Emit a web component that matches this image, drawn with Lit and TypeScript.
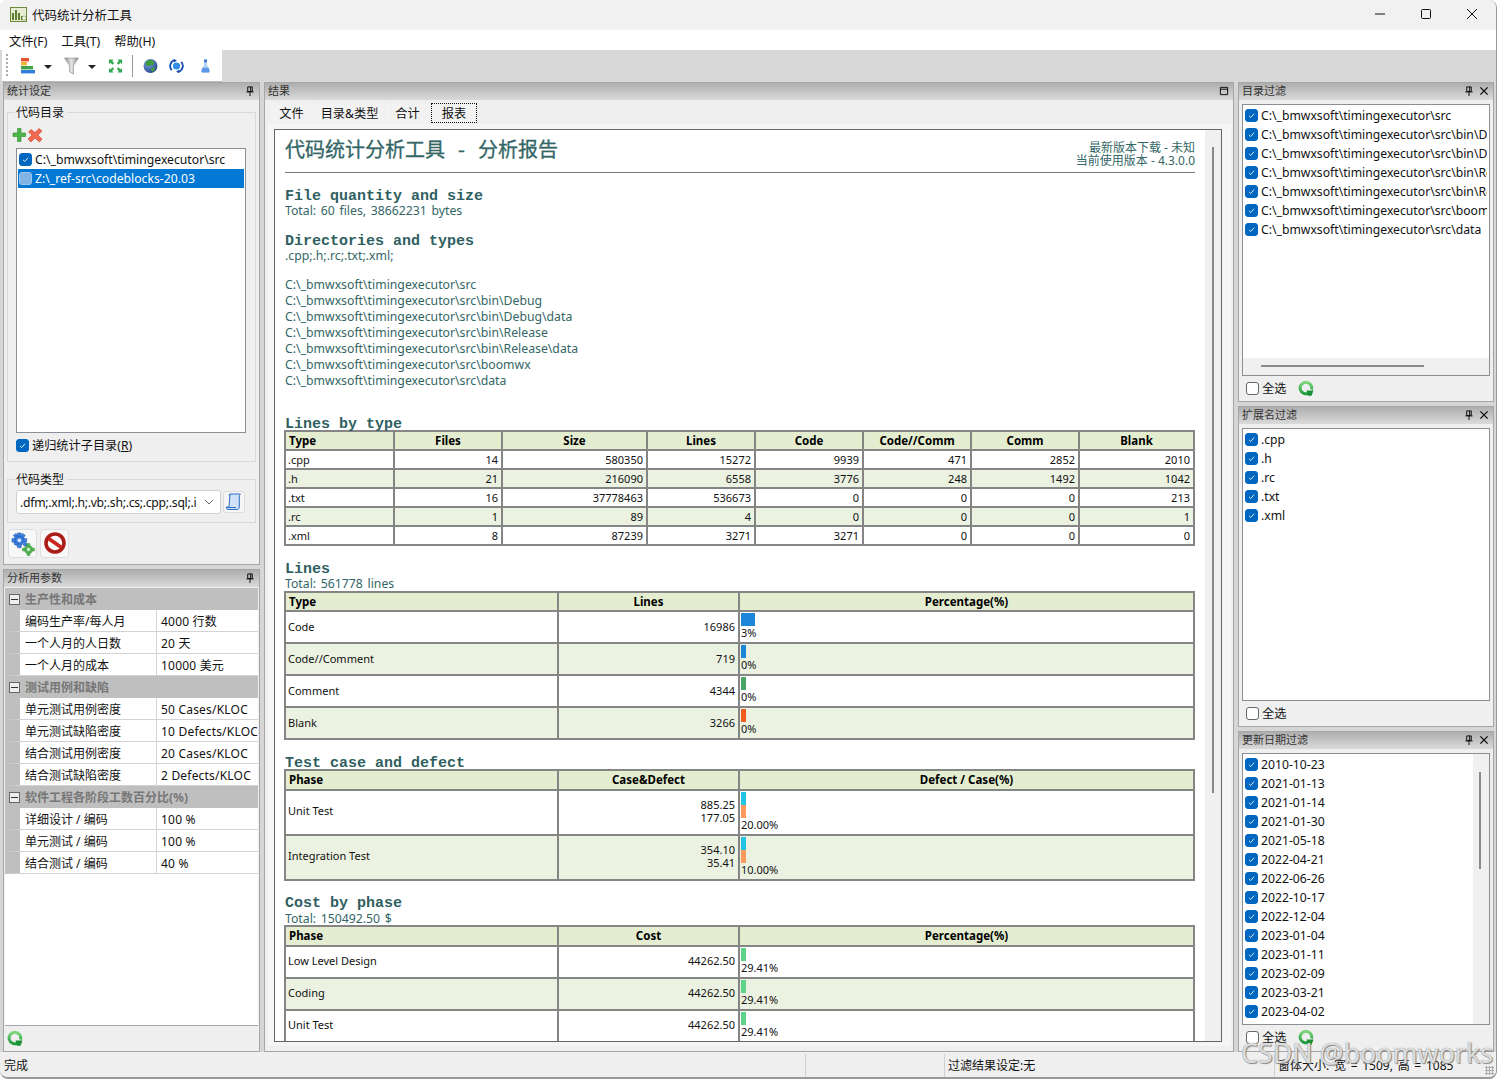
import { LitElement, html, css, TemplateResult } from "lit";
import { customElement } from "lit/decorators.js";

const check = html`<svg class="tick" viewBox="0 0 13 13"><path d="M3.5 6.8 5.6 8.9 9.6 4.3" fill="none" stroke="#fff" stroke-width="1"/></svg>`;
const cb = (on = true, cls = "") => html`<span class="cb ${on ? "on" : ""} ${cls}">${on ? check : ""}</span>`;

const pin = html`<svg class="hi" viewBox="0 0 11 11"><path d="M3 1h5v5H3zM6.2 1v5M1.5 6.5h8M5.5 6.5V11" fill="none" stroke="#111" stroke-width="1.1"/></svg>`;
const closeI = html`<svg class="hi" viewBox="0 0 11 11"><path d="M1.5 1.5l8 8M9.5 1.5l-8 8" stroke="#111" stroke-width="1.5"/></svg>`;
const restore = html`<svg class="hi" viewBox="0 0 11 11"><path d="M1.5 1.5h8v8h-8zM1.5 3.5h8" fill="none" stroke="#111" stroke-width="1.1"/></svg>`;

const refresh = html`<svg class="rf" viewBox="0 0 16 16"><defs><linearGradient id="rg" x1="0" y1="0" x2="0" y2="1"><stop offset="0" stop-color="#7fd67f"/><stop offset="1" stop-color="#1f9a3c"/></linearGradient></defs><path d="M11 12.900A5.800 5.800 0 1 1 13.500 9.500" fill="none" stroke="url(#rg)" stroke-width="3"/><path d="M8.500 10.500h7l-2 5.300h-3.500z" fill="#1b8f33"/></svg>`;

const tbChart = html`<svg class="tb" viewBox="0 0 15 18"><rect x="1" y="1" width="8" height="3.4" fill="#e8512f"/><rect x="1" y="5" width="6" height="3.4" fill="#f2b632"/><rect x="1" y="9" width="12" height="3.4" fill="#3fa34d"/><rect x="1" y="13" width="14" height="3.4" fill="#2f7fd6"/></svg>`;
const tbFilter = html`<svg class="tb" viewBox="0 0 15 18"><defs><linearGradient id="fg" x1="0" x2="1"><stop offset="0" stop-color="#8f8f8f"/><stop offset=".5" stop-color="#e4e4e4"/><stop offset="1" stop-color="#8a8a8a"/></linearGradient></defs><path d="M.5 1h14L9.500 8.500V17l-4-2V8.500z" fill="url(#fg)" stroke="#8b8b8b" stroke-width=".6"/></svg>`;
const tbExpand = html`<svg class="tb" viewBox="0 0 16 16"><g fill="#34a853"><path d="M1 1h5L4.400 2.600 6.600 4.800 4.800 6.600 2.600 4.400 1 6z"/><path d="M15 1h-5l1.600 1.600-2.200 2.200 1.800 1.800 2.200-2.200L15 6z"/><path d="M1 15h5l-1.600-1.600 2.200-2.200-1.800-1.800-2.200 2.200L1 10z"/><path d="M15 15h-5l1.600-1.600-2.200-2.200 1.800-1.800 2.200 2.200L15 10z"/></g></svg>`;
const tbGlobe = html`<svg class="tb" viewBox="0 0 16 16"><defs><radialGradient id="gl" cx=".35" cy=".3" r=".8"><stop offset="0" stop-color="#7fa8e0"/><stop offset="1" stop-color="#1c3c8c"/></radialGradient></defs><circle cx="8" cy="8" r="7.400" fill="url(#gl)"/><path d="M5 2c3-1 6 0 7 2 1 2-1 3-3 3S7 9 5 8 2 6 3 4zM9 10c2-1 4-1 4 0 0 2-2 4-3 4s-2-3-1-4z" fill="#3d9a3d"/></svg>`;
const tbSync = html`<svg class="tb" viewBox="0 0 16 16"><circle cx="8" cy="8" r="3.800" fill="#2f8fe8"/><path d="M3 12.500A6.500 6.500 0 0 1 6 1.800M13 3.500A6.500 6.500 0 0 1 10 14.200" fill="none" stroke="#1c4fb0" stroke-width="2"/><path d="M5 .2 8.400 2 5.400 4.200zM11 15.800 7.600 14l3-2.200z" fill="#1c4fb0"/></svg>`;
const tbFlask = html`<svg class="tb fl" viewBox="0 0 16 18"><path d="M6 1h4v3l-.2 3 3.200 8c.3 1.200-.4 2-1.400 2H4.400c-1 0-1.700-.8-1.400-2l3.200-8L6 4z" fill="#b5d4f5"/><path d="M6.200 1h3.600v3.500H6.200z" fill="#3b76d0"/><path d="M4 11h8l1 4c.2 1-.5 2-1.400 2H4.400c-.9 0-1.600-1-1.400-2z" fill="#5b97e6"/></svg>`;

const plusX = html`<svg class="addx" viewBox="0 0 32 16"><path d="M5.500 1.500h3.500v4.500h4.500v3.500H9v5H5.500v-5H1V6h4.500z" fill="#4cb648" stroke="#2d8a2d" stroke-width=".6"/><path d="M19 2.500 23 5.500l4-4 3 2.500-4 4 4 4-2.500 3-4.500-4-4 4-3-3 4-4-3.500-3z" fill="#ef6a50" stroke="#c83a22" stroke-width=".6"/></svg>`;
const scroll = html`<svg class="sc" viewBox="0 0 16 18"><path d="M4 1h10.500c-1 1-1.200 2-1.200 3v10c0 1.500-1 2.500-2.300 2.500H2c-1.200 0-1.600-1-1.500-2.500H3z" fill="#cfe2f7" stroke="#2f6fc2"/><path d="M4 1c-1 0-1 2 0 2M1 14.500h9" fill="none" stroke="#2f6fc2"/></svg>`;
const gears = html`<svg class="bi" viewBox="0 0 26 26"><g fill="#3c7fe0" stroke="#1f56ad" stroke-width=".5"><circle cx="9" cy="9" r="5.500"/><path d="M7 1h4v4H7zM7 13h4v4H7zM1 7h4v4H1zM13 7h4v4h-4zM2.500 3.500l3-2 2 3-3 2zM13 14l2-3 3 2-2 3zM12.500 1.500l3 2-2 3-3-2zM3 13l2-3 3 2-2 3z"/></g><circle cx="9" cy="9" r="2" fill="#d9e8fb"/><g fill="#5ab95a" stroke="#2f8a2f" stroke-width=".5"><circle cx="19" cy="19" r="4.500"/><path d="M17.500 12.500h3v3h-3zM17.500 22.500h3v3h-3zM12.500 17.500h3v3h-3zM22.500 17.500h3v3h-3z"/></g><circle cx="19" cy="19" r="1.600" fill="#dff2df"/></svg>`;
const stop = html`<svg class="bi" viewBox="0 0 24 24"><circle cx="12" cy="11" r="9" fill="#fff" stroke="#b3201a" stroke-width="3.600"/><circle cx="12" cy="11" r="9" fill="none" stroke="#7d1511" stroke-width=".5"/><path d="M5.500 6.500 18.500 15.500" stroke="#c9261f" stroke-width="3.800"/></svg>`;

const groups: { title: string; rows: [string, string][] }[] = [
  { title: "生产性和成本", rows: [["编码生产率/每人月", "4000 行数"], ["一个人月的人日数", "20 天"], ["一个人月的成本", "10000 美元"]] },
  { title: "测试用例和缺陷", rows: [["单元测试用例密度", "50 Cases/KLOC"], ["单元测试缺陷密度", "10 Defects/KLOC"], ["结合测试用例密度", "20 Cases/KLOC"], ["结合测试缺陷密度", "2 Defects/KLOC"]] },
  { title: "软件工程各阶段工数百分比(%)", rows: [["详细设计 / 编码", "100 %"], ["单元测试 / 编码", "100 %"], ["结合测试 / 编码", "40 %"]] },
];

const base = "C:\\_bmwxsoft\\timingexecutor\\src";
const dirs = [base, base + "\\bin\\Debug", base + "\\bin\\Debug\\data", base + "\\bin\\Release", base + "\\bin\\Release\\data", base + "\\boomwx", base + "\\data"];
const exts = [".cpp", ".h", ".rc", ".txt", ".xml"];
const dates = ["2010-10-23", "2021-01-13", "2021-01-14", "2021-01-30", "2021-05-18", "2022-04-21", "2022-06-26", "2022-10-17", "2022-12-04", "2023-01-04", "2023-01-11", "2023-02-09", "2023-03-21", "2023-04-02"];

const typeCols = [109, 108, 145, 108, 108, 108, 108, 115];
const typeHead = ["Type", "Files", "Size", "Lines", "Code", "Code//Comm", "Comm", "Blank"];
const typeRows = [
  [".cpp", "14", "580350", "15272", "9939", "471", "2852", "2010"],
  [".h", "21", "216090", "6558", "3776", "248", "1492", "1042"],
  [".txt", "16", "37778463", "536673", "0", "0", "0", "213"],
  [".rc", "1", "89", "4", "0", "0", "0", "1"],
  [".xml", "8", "87239", "3271", "3271", "0", "0", "0"],
];
const wideCols = [273, 181, 455];

type BarRow = { name: string; val: string[]; bars: { w: number; c: string }[]; pct: string };
const lineRows: BarRow[] = [
  { name: "Code", val: ["16986"], bars: [{ w: 14, c: "#1c86d8" }], pct: "3%" },
  { name: "Code//Comment", val: ["719"], bars: [{ w: 5, c: "#1c86d8" }], pct: "0%" },
  { name: "Comment", val: ["4344"], bars: [{ w: 5, c: "#4aa564" }], pct: "0%" },
  { name: "Blank", val: ["3266"], bars: [{ w: 5, c: "#f25c1f" }], pct: "0%" },
];
const testRows: BarRow[] = [
  { name: "Unit Test", val: ["885.25", "177.05"], bars: [{ w: 5, c: "#22c4e6" }, { w: 5, c: "#ff9a5c" }], pct: "20.00%" },
  { name: "Integration Test", val: ["354.10", "35.41"], bars: [{ w: 5, c: "#22c4e6" }, { w: 5, c: "#ff9a5c" }], pct: "10.00%" },
];
const costRows: BarRow[] = [
  { name: "Low Level Design", val: ["44262.50"], bars: [{ w: 5, c: "#5fd38a" }], pct: "29.41%" },
  { name: "Coding", val: ["44262.50"], bars: [{ w: 5, c: "#5fd38a" }], pct: "29.41%" },
  { name: "Unit Test", val: ["44262.50"], bars: [{ w: 5, c: "#5fd38a" }], pct: "29.41%" },
];

@customElement("app-root")
export class AppRoot extends LitElement {
  static styles = css`
    :host { display: block; width: 1497px; height: 1079px; overflow: hidden; font: 12.2px "Noto Sans", "Noto Sans CJK SC", sans-serif; color: #111; }
    * { box-sizing: border-box; }
    .window { position: relative; width: 1497px; height: 1079px; background: #d6d6d6; display: flex; flex-direction: column; border-right: 1px solid #999; border-bottom: 2px solid #999; border-radius: 8px; overflow: hidden; }
    .title { height: 30px; flex: none; background: #f1f1f1; display: flex; align-items: center; padding: 0 1px 2px 10px; gap: 5px; font-size: 12.5px; }
    .title svg.logo { width: 17px; height: 15px; }
    .title .grow { flex: 1; }
    .winbtn { width: 46px; height: 28px; margin-left: -5px; display: flex; align-items: center; justify-content: center; }
    .winbtn svg { width: 12px; height: 12px; }
    .menu { height: 20px; flex: none; background: #fff; display: flex; align-items: center; padding: 1px 0 0 9px; gap: 14px; font-size: 12.3px; }
    .toolband { height: 32px; flex: none; background: #d8d8d8; display: flex; padding-left: 2px; align-items: flex-start; }
    .toolbar { width: 220px; height: 31px; background: #fff; display: flex; align-items: center; padding-left: 4px; box-shadow: 0 1px 0 #bbb; }
    .grip { width: 2px; height: 23px; margin-right: 12px; background-image: repeating-linear-gradient(#aaa 0 2px, transparent 2px 4px); }
    .tb { width: 15px; height: 18px; display: block; }
    .tb.fl { width: 13px; }
    .arrow { width: 0; height: 0; border: 4px solid transparent; border-top: 4px solid #222; border-bottom: 0; margin: 2px 12px 0 9px; }
    .tsep { width: 1px; height: 22px; background: #9a9a9a; margin: 0 10px 0 9px; }
    .gap1 { margin-right: 11px; }
    .gap2 { margin-right: 15px; }
    .main { height: 970px; flex: none; display: grid; grid-template-columns: 257px 970px 256px; grid-template-rows: 970px; column-gap: 4px; padding-left: 3px; }
    .col { display: flex; flex-direction: column; gap: 4px; min-height: 0; }
    .panel { background: #efefef; border: 1px solid #a6a6a6; display: flex; flex-direction: column; min-height: 0; overflow: hidden; }
    .ph { height: 17px; flex: none; background: linear-gradient(#aeaeae, #dadada); display: flex; align-items: center; padding: 0 4px 3px 3px; gap: 5px; font-size: 11px; color: #333; }
    .ph .t { flex: 1; }
    .ph .hi { margin-top: 2px; }
    .hi { width: 10px; height: 10px; display: block; }
    .p-settings { height: 483px; flex: none; }
    .p-params { flex: 1; }
    .fs { position: relative; border: 1px solid #d9d9d9; margin: 0 3px; }
    .fs > .leg { position: absolute; left: 7px; top: -8px; background: #efefef; padding: 0 3px 0 1px; line-height: 15px; font-size: 12px; }
    .fs1 { height: 350px; flex: none; margin-top: 12px; padding: 14px 9px 0 8px; }
    .addx { width: 32px; height: 16px; display: block; margin-left: -4px; }
    .list { background: #fff; border: 1px solid #8a8f96; overflow: hidden; }
    .fs1 .list { height: 285px; margin-top: 5px; padding: 1px 1px; }
    .fs1 .li { padding-left: 1px; }
    .li { height: 19px; display: flex; align-items: center; padding-left: 2px; gap: 3px; white-space: nowrap; line-height: 19px; overflow: hidden; }
    .li.sel { background: #0078d4; color: #fff; }
    .cb { width: 13px; height: 13px; flex: none; border-radius: 3px; border: 1px solid #666; background: #fff; display: block; }
    .cb.on { background: #0067c0; border-color: #0067c0; }
    .cb.lite { background: #7fb4e4; border-color: #9cc6ec; }
    .tick { display: block; width: 11px; height: 11px; }
    .chk { display: flex; align-items: center; gap: 3px; height: 22px; margin-top: 1px; white-space: nowrap; }
    .u { text-decoration: underline; }
    .fs2 { height: 44px; flex: none; margin-top: 17px; padding: 10px 8px 0; display: flex; gap: 2px; }
    .combo { width: 205px; height: 24px; background: #fff; border: 1px solid #d0d0d0; border-radius: 3px; display: flex; align-items: center; padding-left: 3px; white-space: nowrap; overflow: hidden; }
    .combo .v { flex: 1; overflow: hidden; letter-spacing: -.27px; }
    .combo svg { width: 22px; height: 10px; flex: none; }
    .sqbtn { width: 22px; height: 22px; background: #f6f6f6; border: 1px solid #dcdcdc; border-radius: 3px; margin-top: 1px; display: flex; align-items: center; justify-content: center; }
    .sc { width: 16px; height: 18px; display: block; }
    .runbtns { display: flex; gap: 3px; padding: 6px 0 0 4px; }
    .run { width: 29px; height: 29px; background: #f8f8f8; border: 1px solid #dedede; border-radius: 4px; display: flex; align-items: center; justify-content: center; }
    .bi { width: 24px; height: 24px; display: block; }
    .pg { flex: 1; margin: 1px 1px 0; background: #fff; border-bottom: 1px solid #a6a6a6; display: flex; flex-direction: column; overflow: hidden; }
    .pg-g { height: 22px; flex: none; background: #bfbfbf; display: flex; align-items: center; padding-left: 4px; gap: 5px; color: #777; font-weight: 700; font-size: 12px; }
    .pm { width: 11px; height: 11px; border: 1px solid #666; background: #eee; display: flex; align-items: center; justify-content: center; }
    .pm::before { content: ""; width: 7px; height: 1px; background: #333; }
    .pg-r { height: 22px; flex: none; display: grid; grid-template-columns: 136px 1fr; border-left: 15px solid #bfbfbf; border-bottom: 1px solid #d3d3d3; }
    .pg-r > span { padding: 2px 0 0 5px; line-height: 20px; white-space: nowrap; overflow: hidden; font-size: 12px; }
    .pg-r > span + span { border-left: 1px solid #d3d3d3; padding-left: 4px; letter-spacing: .2px; }
    .pfoot { height: 25px; flex: none; display: flex; align-items: center; padding: 0 0 2px 3px; }
    .rf { width: 16px; height: 16px; display: block; }
    .tabs { height: 24px; flex: none; display: flex; padding: 3px 0 0 4px; gap: 1px; background: #efefef; }
    .tab { height: 20px; background: #f2f2f2; display: flex; align-items: center; justify-content: center; padding-bottom: 1px; }
    .tab.w1 { width: 45px; } .tab.w2 { width: 69px; } .tab.w3 { width: 45px; }
    .tab.on { width: 46px; outline: 1px dotted #111; outline-offset: -1px; background: #f2f2f2; }
    .page { flex: 1; margin: 0 2px 5px 3px; padding: 5px 9px 4px 6px; background: #f5f5f5; display: flex; min-height: 0; }
    .report { flex: 1; background: #fff; border: 1px solid #666; display: flex; min-height: 0; overflow: hidden; }
    .rc { flex: 1; padding: 0 10px; overflow: hidden; color: #336666; font-size: 12.25px; line-height: 16px; word-spacing: 1.5px; }
    .vsb { width: 16px; flex: none; background: #f0f0f0; position: relative; }
    .vsb::after { content: ""; position: absolute; left: 7px; width: 2px; background: #8a8a8a; top: 17px; height: 646px; }
    .rtitle { height: 43px; border-bottom: 1px solid #777; display: flex; justify-content: space-between; }
    .rtitle h1 { margin: 6px 0 0; font: 400 20px/26px "Noto Sans CJK SC", sans-serif; color: #336666; white-space: pre; word-spacing: 8.5px; -webkit-text-stroke: .3px #336666; }
    .ver { text-align: right; line-height: 13px; padding-top: 11px; font-size: 12px; word-spacing: 0; }
    h2 { margin: 0; font: 700 15px/13px "Liberation Mono", monospace; color: #2f5f5f; white-space: pre; word-spacing: 0; }
    .h-file { margin-top: 17px; }
    .h-dir { margin-top: 16px; }
    .gap12 { height: 13px; }
    .h-lbt { margin-top: 29px; margin-bottom: -1px; }
    .h-lines { margin-top: 17px; }
    .h-test { margin-top: 17px; margin-bottom: -1px; }
    .h-cost { margin-top: 16px; margin-bottom: 1px; }
    .tot { margin-bottom: -1px; }
    .tot2 { margin-bottom: -2px; }
    table { border-collapse: collapse; table-layout: fixed; width: 909px; margin-left: -1px; color: #111; font-size: 11px; line-height: 12px; word-spacing: 0; }
    th, td { border: 2px solid #858585; padding: 0 2px; white-space: nowrap; overflow: hidden; }
    th { background: #e4edd0; color: #000; font-weight: 700; text-align: center; height: 19px; font-size: 11.5px; }
    .h20 th { height: 20px; }
    th.l { text-align: left; padding-left: 3px; }
    td.r { text-align: right; padding-right: 3px; }
    tr.alt td { background: #ecf2e2; }
    .tt td { height: 19px; }
    .tb32 td { height: 32px; }
    .tb45 td { height: 45px; }
    .val { line-height: 13px; font-size: 11px; }
    .tb32 td.val { padding-bottom: 2px; }
    .tb45 td:not(.barcell), .h20.tb32 td:not(.barcell) { padding-bottom: 3px; }
    .barcell { padding: 0 0 0 1px; vertical-align: top; }
    .barcell .b { display: block; height: 13px; }
    .barcell .first { margin-top: 1px; }
    .pct { line-height: 12px; margin-top: 1px; font-size: 11px; }
    .p-dir { height: 320px; flex: none; }
    .p-ext { height: 321px; flex: none; }
    .p-date { flex: 1; }
    .fbody { flex: 1; display: flex; flex-direction: column; padding: 4px 3px 0; min-height: 0; }
    .fbody .list { flex: 1; position: relative; min-height: 0; padding: 1px 2px 0 0; }
    .hsb { position: absolute; left: 0; right: 0; bottom: 0; height: 17px; background: #f0f0f0; }
    .hsb::after { content: ""; position: absolute; left: 18px; width: 163px; height: 2px; top: 7px; background: #8a8a8a; }
    .vs2 { position: absolute; right: 0; top: 0; bottom: 0; width: 16px; background: #f0f0f0; }
    .vs2::after { content: ""; position: absolute; left: 6px; top: 18px; width: 2px; height: 97px; background: #8a8a8a; }
    .ffoot { height: 25px; flex: none; display: flex; align-items: center; gap: 3px; padding: 0 0 1px 4px; }
    .p-date .ffoot { height: 26px; padding-bottom: 2px; }
    .ffoot .rf { margin-left: 9px; }
    .status { height: 25px; flex: none; overflow: hidden; background: #efefef; display: grid; grid-template-columns: 803px 139px 330px 1fr; padding: 2px 0 0 3px; line-height: 22px; font-size: 12px; white-space: nowrap; }
    .status > span { padding-left: 1px; border-right: 1px solid #d0d0d0; padding-top: 1px; }
    .status > span:nth-child(3) { padding-left: 3px; }
    .status > span:last-child { border: 0; padding-left: 3px; word-spacing: 1.6px; }
    .watermark { position: absolute; left: 1241px; top: 1035px; font: 26.8px/36px "Noto Sans", sans-serif; color: rgba(240,240,240,.85); text-shadow: 0 0 1px #777, 1px 1px 1px #888; white-space: nowrap; pointer-events: none; }
    .sizegrip { position: absolute; right: 2px; bottom: 2px; width: 9px; height: 9px; background-image: radial-gradient(#aaa 1px, transparent 1.2px); background-size: 3px 3px; }
  `;

  private panelHead(title: string, icons: TemplateResult[]) {
    return html`<div class="ph"><span class="t">${title}</span>${icons}</div>`;
  }

  private barTable(head: string[], rows: BarRow[], cls: string) {
    return html`<table class=${cls}>
      <colgroup>${wideCols.map((w) => html`<col style="width:${w}px" />`)}</colgroup>
      <tr><th class="l">${head[0]}</th><th>${head[1]}</th><th>${head[2]}</th></tr>
      ${rows.map((r, i) => html`<tr class=${i % 2 ? "alt" : ""}>
        <td>${r.name}</td>
        <td class="r val">${r.val.map((v) => html`<div>${v}</div>`)}</td>
        <td class="barcell">
          ${r.bars.map((b, k) => html`<span class="b ${k === 0 ? "first" : ""}" style="width:${b.w}px;background:${b.c}"></span>`)}
          <div class="pct">${r.pct}</div>
        </td>
      </tr>`)}
    </table>`;
  }

  private filterPanel(cls: string, title: string, items: string[], inner: TemplateResult | string, foot: boolean) {
    return html`<div class="panel ${cls}">
      ${this.panelHead(title, [pin, closeI])}
      <div class="fbody">
        <div class="list">
          ${items.map((t) => html`<div class="li">${cb()}<span>${t}</span></div>`)}
          ${inner}
        </div>
        <div class="ffoot">${cb(false)}<span>全选</span>${foot ? refresh : ""}</div>
      </div>
    </div>`;
  }

  render() {
    return html`<div class="window">
      <div class="title">
        <svg class="logo" viewBox="0 0 17 15">
          <rect width="17" height="15" fill="#6c8a3a" />
          <rect x="1" y="1" width="15" height="13" fill="#e6edd2" />
          <path d="M2 13V6h2v7zM5 13V3h2v10zM8 13V6h2v7zM11 13V9h2v4z" fill="#5d7d2c" />
          <circle cx="14" cy="11" r="2" fill="#fff" stroke="#6c8a3a" stroke-width=".6"/>
        </svg>
        <span>代码统计分析工具</span>
        <span class="grow"></span>
        <span class="winbtn"><svg viewBox="0 0 12 12"><path d="M1 6h10" stroke="#111"/></svg></span>
        <span class="winbtn"><svg viewBox="0 0 12 12"><rect x="1.500" y="1.500" width="9" height="9" rx="1" fill="none" stroke="#111"/></svg></span>
        <span class="winbtn"><svg viewBox="0 0 12 12"><path d="M1 1l10 10M11 1 1 11" stroke="#111"/></svg></span>
      </div>
      <div class="menu"><span>文件(F)</span><span>工具(T)</span><span>帮助(H)</span></div>
      <div class="toolband">
        <div class="toolbar">
          <span class="grip"></span>
          ${tbChart}<span class="arrow"></span>${tbFilter}<span class="arrow"></span>${tbExpand}
          <span class="tsep"></span>
          <span class="gap1">${tbGlobe}</span><span class="gap2">${tbSync}</span>${tbFlask}
        </div>
      </div>
      <div class="main">
        <div class="col">
          <div class="panel p-settings">
            ${this.panelHead("统计设定", [pin])}
            <div class="fs fs1">
              <span class="leg">代码目录</span>
              ${plusX}
              <div class="list">
                <div class="li">${cb()}<span>${base}</span></div>
                <div class="li sel">${cb(false, "lite")}<span>Z:\\_ref-src\\codeblocks-20.03</span></div>
              </div>
              <div class="chk">${cb()}<span>递归统计子目录(<span class="u">R</span>)</span></div>
            </div>
            <div class="fs fs2">
              <span class="leg">代码类型</span>
              <div class="combo"><span class="v">.dfm;.xml;.h;.vb;.sh;.cs;.cpp;.sql;.i</span>
                <svg viewBox="0 0 22 10"><path d="M7 3l4 4 4-4" fill="none" stroke="#666"/></svg></div>
              <div class="sqbtn">${scroll}</div>
            </div>
            <div class="runbtns"><div class="run">${gears}</div><div class="run">${stop}</div></div>
          </div>
          <div class="panel p-params">
            ${this.panelHead("分析用参数", [pin])}
            <div class="pg">
              ${groups.map((g) => html`
                <div class="pg-g"><span class="pm"></span><span>${g.title}</span></div>
                ${g.rows.map((r) => html`<div class="pg-r"><span>${r[0]}</span><span>${r[1]}</span></div>`)}
              `)}
            </div>
            <div class="pfoot">${refresh}</div>
          </div>
        </div>

        <div class="panel">
          ${this.panelHead("结果", [restore])}
          <div class="tabs">
            <div class="tab w1">文件</div><div class="tab w2">目录&类型</div><div class="tab w3">合计</div><div class="tab on">报表</div>
          </div>
          <div class="page">
            <div class="report">
              <div class="rc">
                <div class="rtitle">
                  <h1>代码统计分析工具 - 分析报告</h1>
                  <div class="ver"><div>最新版本下载 - 未知</div><div>当前使用版本 - 4.3.0.0</div></div>
                </div>
                <h2 class="h-file">File quantity and size</h2>
                <div>Total: 60 files, 38662231 bytes</div>
                <h2 class="h-dir">Directories and types</h2>
                <div>.cpp;.h;.rc;.txt;.xml;</div>
                <div class="gap12"></div>
                ${dirs.map((d) => html`<div>${d}</div>`)}
                <h2 class="h-lbt">Lines by type</h2>
                <table class="tt">
                  <colgroup>${typeCols.map((w) => html`<col style="width:${w}px" />`)}</colgroup>
                  <tr>${typeHead.map((h, i) => html`<th class=${i === 0 ? "l" : ""}>${h}</th>`)}</tr>
                  ${typeRows.map((r, i) => html`<tr class=${i % 2 ? "alt" : ""}>${r.map((c, j) => html`<td class=${j ? "r" : ""}>${c}</td>`)}</tr>`)}
                </table>
                <h2 class="h-lines">Lines</h2>
                <div class="tot">Total: 561778 lines</div>
                ${this.barTable(["Type", "Lines", "Percentage(%)"], lineRows, "tb32")}
                <h2 class="h-test">Test case and defect</h2>
                ${this.barTable(["Phase", "Case&Defect", "Defect / Case(%)"], testRows, "tb45 h20")}
                <h2 class="h-cost">Cost by phase</h2>
                <div class="tot2">Total: 150492.50 $</div>
                ${this.barTable(["Phase", "Cost", "Percentage(%)"], costRows, "tb32 h20")}
              </div>
              <div class="vsb"></div>
            </div>
          </div>
        </div>

        <div class="col">
          ${this.filterPanel("p-dir", "目录过滤", dirs, html`<div class="hsb"></div>`, true)}
          ${this.filterPanel("p-ext", "扩展名过滤", exts, "", false)}
          ${this.filterPanel("p-date", "更新日期过滤", dates, html`<div class="vs2"></div>`, true)}
        </div>
      </div>
      <div class="status">
        <span>完成</span><span></span><span>过滤结果设定:无</span><span>窗体大小: 宽 = 1509, 高 = 1085</span>
      </div>
      <div class="watermark">CSDN @boomworks</div>
      <div class="sizegrip"></div>
    </div>`;
  }
}
